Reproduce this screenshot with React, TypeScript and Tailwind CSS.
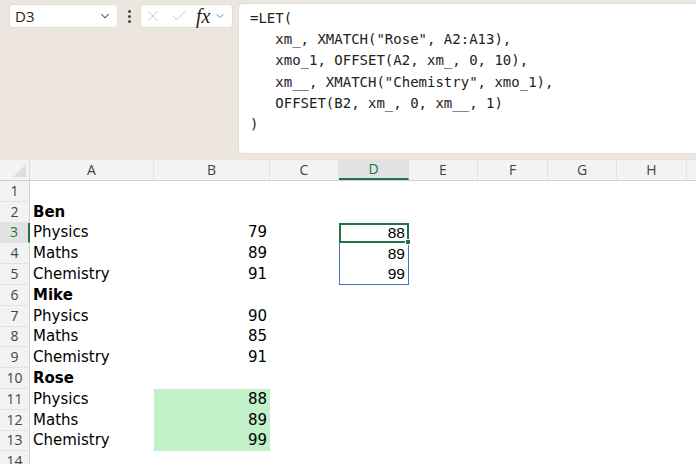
import { ChevronDown, X, Check } from "lucide-react"

const cols = ["A", "B", "C", "D", "E", "F", "G", "H"]

type Row = { a?: string; b?: string; d?: string; bold?: boolean; green?: boolean }

const rows: Row[] = [
  {},
  { a: "Ben", bold: true },
  { a: "Physics", b: "79", d: "88" },
  { a: "Maths", b: "89", d: "89" },
  { a: "Chemistry", b: "91", d: "99" },
  { a: "Mike", bold: true },
  { a: "Physics", b: "90" },
  { a: "Maths", b: "85" },
  { a: "Chemistry", b: "91" },
  { a: "Rose", bold: true },
  { a: "Physics", b: "88", green: true },
  { a: "Maths", b: "89", green: true },
  { a: "Chemistry", b: "99", green: true },
  {},
]

const formula = [
  "=LET(",
  "   xm_, XMATCH(\"Rose\", A2:A13),",
  "   xmo_1, OFFSET(A2, xm_, 0, 10),",
  "   xm__, XMATCH(\"Chemistry\", xmo_1),",
  "   OFFSET(B2, xm_, 0, xm__, 1)",
  ")",
]

const grid = "grid grid-cols-[30px_124px_116px_69px_70px_69px_70px_69px_70px_9px]"

export default function App() {
  return (
    <div className="w-[696px] h-[464px] overflow-hidden bg-white font-['Liberation_Sans',sans-serif]">
      {/* formula bar */}
      <div className="h-[160px] bg-[#ece6de] flex items-start pt-[3px]">
        <div className="flex items-center gap-[6px] pl-[9px] pt-[1px]">
          <div className="w-[109px] h-[24px] bg-white rounded-[4px] border border-[#e2ddd6] flex items-center justify-between pl-[5px] pr-[5px]">
            <span className="text-[15px] text-[#1f1f1f] font-['Open_Sans',sans-serif]">D3</span>
            <ChevronDown className="w-[14px] h-[14px] text-[#444]" strokeWidth={1.8} />
          </div>
          <div className="flex flex-col gap-[2px] w-[10px] items-center">
            <span className="w-[3px] h-[3px] bg-[#444] rounded-full" />
            <span className="w-[3px] h-[3px] bg-[#444] rounded-full" />
            <span className="w-[3px] h-[3px] bg-[#444] rounded-full" />
          </div>
          <div className="w-[93px] h-[24px] bg-white rounded-[4px] border border-[#e2ddd6] flex items-center pl-[3px] gap-[8px]">
            <X className="w-[18px] h-[18px] text-[#c4c4c4]" strokeWidth={1.2} />
            <Check className="w-[18px] h-[18px] text-[#c4c4c4]" strokeWidth={1.2} />
            <span className="font-['Liberation_Serif',serif] italic text-[20px] leading-none text-[#222]">
              fx
            </span>
            <ChevronDown className="w-[12px] h-[12px] text-[#777] -ml-[4px]" strokeWidth={1.8} />
          </div>
        </div>
        <div className="ml-[5px] flex-1 h-[151px] bg-white rounded-l-[5px] border border-r-0 border-[#e2ddd6] pl-[11px] pt-[4px]">
          {formula.map((l, i) => (
            <div
              key={i}
              className="h-[21.2px] leading-[21px] text-[14px] text-[#222] whitespace-pre font-['DejaVu_Sans_Mono',monospace]"
            >
              {l}
            </div>
          ))}
        </div>
      </div>

      {/* column headers */}
      <div className={`${grid} h-[21px] bg-[#f3f3f3] border-b border-[#cfcfcf]`}>
        <div className="relative border-r border-[#dcdcdc]">
          <div className="absolute right-[3px] bottom-[3px] w-0 h-0 border-l-[13px] border-l-transparent border-b-[13px] border-b-[#dedede]" />
        </div>
        {cols.map((c) => (
          <div
            key={c}
            className={
              c === "D"
                ? "flex items-center justify-center text-[14px] leading-none text-[#217346] bg-[#e2e2e2] border-r border-[#dcdcdc] border-b-2 border-b-[#217346] font-['Open_Sans',sans-serif]"
                : "flex items-center justify-center text-[14px] leading-none text-[#444] border-r border-[#e4e4e4] font-['Open_Sans',sans-serif]"
            }
          >
            {c}
          </div>
        ))}
        <div />
      </div>

      {/* rows */}
      {rows.map((r, i) => {
        const n = i + 1
        const sel = n === 3
        return (
          <div key={n} className={`${grid} grid-rows-[20.8px] h-[20.8px] leading-none`}>
            <div
              className={
                sel
                  ? "flex items-center justify-center text-[14px] text-[#217346] bg-[#e2e2e2] border-r-2 border-r-[#217346] border-b border-b-[#e2e2e2] font-['Open_Sans',sans-serif]"
                  : "flex items-center justify-center text-[14px] text-[#444] bg-[#f3f3f3] border-r border-r-[#cfcfcf] border-b border-b-[#e2e2e2] font-['Open_Sans',sans-serif]"
              }
            >
              {n}
            </div>
            <div
              className={`flex items-center pl-[3px] text-[15px] text-black font-['DejaVu_Sans',sans-serif] ${
                r.bold ? "font-bold" : ""
              }`}
            >
              {r.a}
            </div>
            <div
              className={`flex items-center justify-end pr-[3px] text-[15px] text-black font-['DejaVu_Sans',sans-serif] ${
                r.green ? "bg-[#c2f0c8]" : ""
              }`}
            >
              {r.b}
            </div>
            <div />
            <div
              className={
                n === 3
                  ? "relative flex items-center justify-end pr-[2px] text-[15.5px] text-black border-2 border-[#217346]"
                  : n === 4
                    ? "flex items-center justify-end pr-[3px] text-[15.5px] text-black border-x border-[#4472c4]"
                    : n === 5
                      ? "flex items-center justify-end pr-[3px] text-[15.5px] text-black border-x border-b border-[#4472c4]"
                      : ""
              }
            >
              {r.d}
              {n === 3 && (
                <span className="absolute -right-[4px] -bottom-[4px] w-[6px] h-[6px] bg-[#217346] border border-white" />
              )}
            </div>
            <div />
            <div />
            <div />
            <div />
            <div />
          </div>
        )
      })}
    </div>
  )
}
